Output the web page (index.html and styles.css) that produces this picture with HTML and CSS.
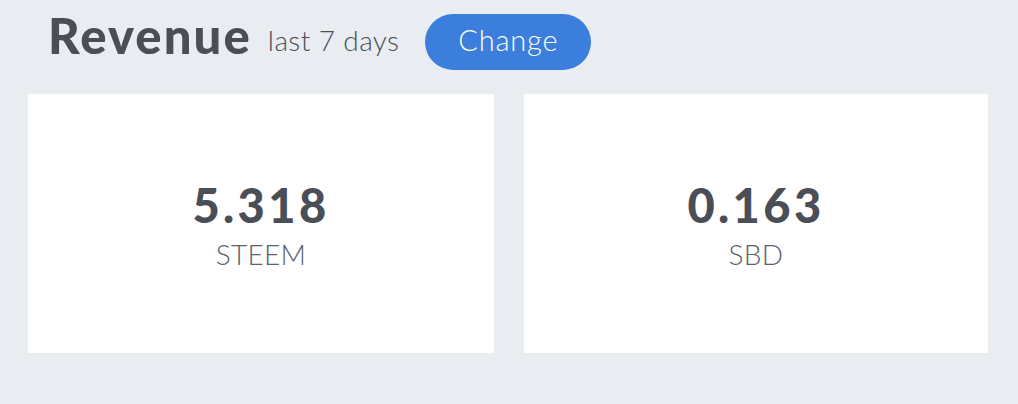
FILE: index.html
```html
<!DOCTYPE html>
<html lang="en">
<head>
    <meta charset="UTF-8">
    <meta name="viewport" content="width=device-width, initial-scale=1.0">
    <title>Revenue</title>
    <link rel="stylesheet" href="styles.css">
</head>
<body>
    <div class="revenue">
        <div class="revenue-header">
            <h1>Revenue</h1>
            <span class="period">last 7 days</span>
            <button class="change-btn">Change</button>
        </div>

        <div class="cards">
            <div class="card">
                <div class="amount">5.318</div>
                <div class="currency">STEEM</div>
            </div>
            <div class="card">
                <div class="amount">0.163</div>
                <div class="currency">SBD</div>
            </div>
        </div>
    </div>
</body>
</html>
```

FILE: styles.css
```css
body {
    margin: 0;
    background: #e9ecf1;
    font-family: Lato, "Noto Sans", sans-serif;
    color: #4a4e57;
}
.revenue {
    padding: 14px 30px 0 28px;
}
.revenue-header {
    display: flex;
    align-items: flex-start;
    height: 56px;
    padding-left: 20px;
}
.revenue-header h1 {
    margin: -3px 0 0;
    font-size: 49px;
    line-height: 1;
    font-weight: 900;
    letter-spacing: 2.1px;
}
.period {
    margin: 12px 0 0 16px;
    font-size: 28px;
    font-weight: 300;
    line-height: 1;
    letter-spacing: 0.4px;
}
.change-btn {
    margin-left: 26px;
    width: 166px;
    height: 56px;
    padding: 0 0 6px;
    border: none;
    border-radius: 28px;
    background: #3b7edb;
    color: white;
    font-family: inherit;
    font-size: 29px;
    font-weight: 300;
    line-height: 1;
    letter-spacing: 0.8px;
    cursor: pointer;
}
.cards {
    display: grid;
    grid-template-columns: 466fr 464fr;
    gap: 30px;
    margin-top: 24px;
}
.card {
    height: 259px;
    box-sizing: border-box;
    padding-top: 88px;
    background: white;
    text-align: center;
}
.amount {
    font-size: 47px;
    font-weight: 900;
    line-height: 1;
    letter-spacing: 3.4px;
}
.currency {
    margin-top: 11px;
    font-size: 28px;
    font-weight: 300;
    color: #5b626d;
    line-height: 1;
    letter-spacing: 0.3px;
}
```
